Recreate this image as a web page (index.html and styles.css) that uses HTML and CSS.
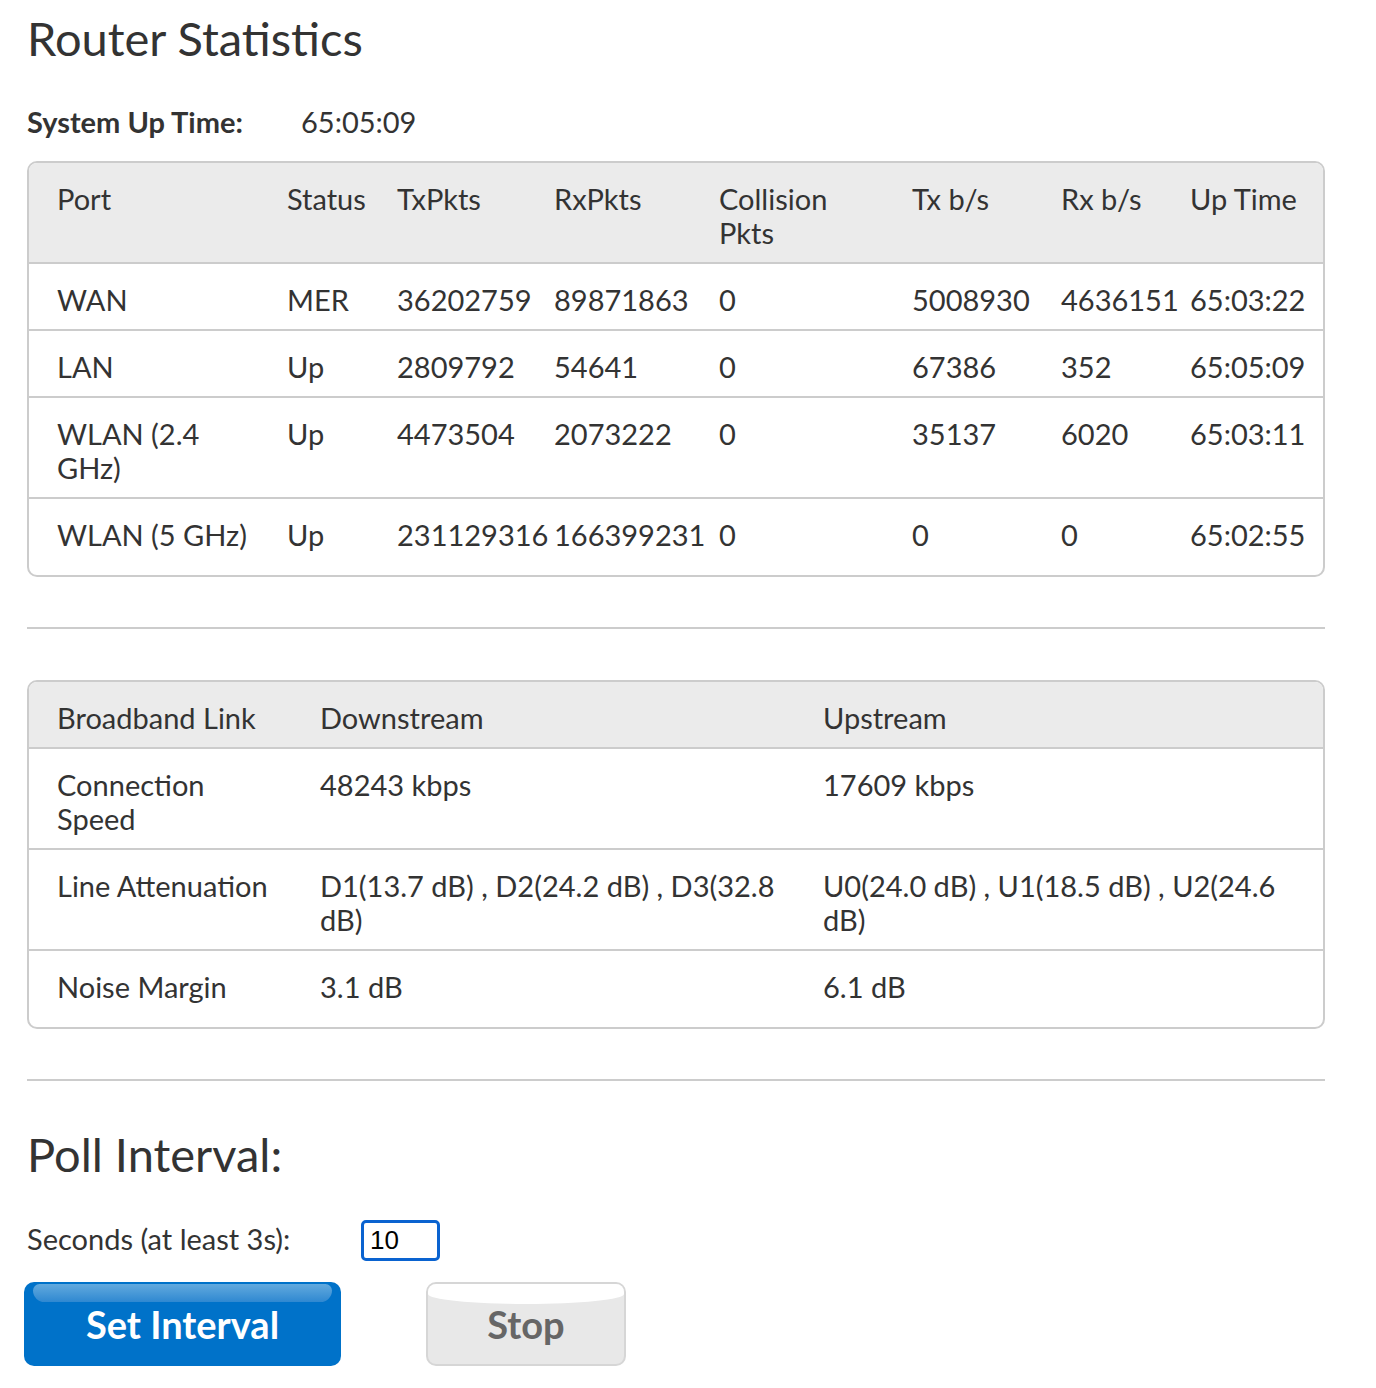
FILE: index.html
```html
<!DOCTYPE html>
<html lang="en">
<head>
    <meta charset="UTF-8">
    <meta name="viewport" content="width=device-width, initial-scale=1.0">
    <title>Router Statistics</title>
    <link rel="stylesheet" href="styles.css">
</head>
<body>
    <div class="page">
        <h1 class="title">Router Statistics</h1>

        <div class="uptime">
            <span class="uptime-label">System Up Time:</span>
            <span class="uptime-value">65:05:09</span>
        </div>

        <div class="table-box">
            <table class="stats ports">
                <colgroup>
                    <col style="width:248px">
                    <col style="width:110px">
                    <col style="width:157px">
                    <col style="width:165px">
                    <col style="width:193px">
                    <col style="width:149px">
                    <col style="width:129px">
                    <col style="width:143px">
                </colgroup>
                <tr>
                    <th>Port</th>
                    <th>Status</th>
                    <th>TxPkts</th>
                    <th>RxPkts</th>
                    <th>Collision<br>Pkts</th>
                    <th>Tx b/s</th>
                    <th>Rx b/s</th>
                    <th>Up Time</th>
                </tr>
                <tr>
                    <td>WAN</td><td>MER</td><td>36202759</td><td>89871863</td><td>0</td><td>5008930</td><td>4636151</td><td>65:03:22</td>
                </tr>
                <tr>
                    <td>LAN</td><td>Up</td><td>2809792</td><td>54641</td><td>0</td><td>67386</td><td>352</td><td>65:05:09</td>
                </tr>
                <tr>
                    <td>WLAN (2.4<br>GHz)</td><td>Up</td><td>4473504</td><td>2073222</td><td>0</td><td>35137</td><td>6020</td><td>65:03:11</td>
                </tr>
                <tr>
                    <td>WLAN (5 GHz)</td><td>Up</td><td>231129316</td><td>166399231</td><td>0</td><td>0</td><td>0</td><td>65:02:55</td>
                </tr>
            </table>
        </div>

        <hr class="divider">

        <div class="table-box">
            <table class="stats link">
                <colgroup>
                    <col style="width:281px">
                    <col style="width:503px">
                    <col style="width:510px">
                </colgroup>
                <tr>
                    <th>Broadband Link</th>
                    <th>Downstream</th>
                    <th>Upstream</th>
                </tr>
                <tr>
                    <td>Connection<br>Speed</td><td>48243 kbps</td><td>17609 kbps</td>
                </tr>
                <tr>
                    <td>Line Attenuation</td>
                    <td>D1(13.7 dB) , D2(24.2 dB) , D3(32.8<br>dB)</td>
                    <td>U0(24.0 dB) , U1(18.5 dB) , U2(24.6<br>dB)</td>
                </tr>
                <tr>
                    <td>Noise Margin</td><td>3.1 dB</td><td>6.1 dB</td>
                </tr>
            </table>
        </div>

        <hr class="divider">

        <h1 class="title poll-title">Poll Interval:</h1>

        <div class="poll-row">
            <label for="pollSeconds" class="poll-label">Seconds (at least 3s):</label>
            <input type="text" id="pollSeconds" class="poll-input" value="10">
        </div>

        <div class="buttons">
            <button class="btn btn-blue">Set Interval</button>
            <button class="btn btn-grey">Stop</button>
        </div>
    </div>
</body>
</html>
```

FILE: styles.css
```css
body {
    font-family: Lato, "Open Sans", sans-serif;
    color: #333;
    background-color: #fff;
    margin: 0;
}
.page {
    width: 1298px;
    margin-left: 27px;
    padding-top: 12px;
}
.title {
    font-size: 47px;
    font-weight: normal;
    line-height: 53px;
    margin: 0;
}
.uptime {
    display: flex;
    font-size: 29px;
    line-height: 34px;
    margin-top: 40px;
}
.uptime-label {
    font-weight: bold;
    width: 274px;
}
.table-box {
    margin-top: 22px;
    border: 2px solid #ccc;
    border-radius: 10px;
    overflow: hidden;
    padding-bottom: 11px;
}
.stats {
    width: 100%;
    table-layout: fixed;
    border-collapse: collapse;
    font-size: 29px;
    line-height: 34px;
}
.stats th, .stats td {
    text-align: left;
    vertical-align: top;
    font-weight: normal;
    padding: 19px 10px 12px;
    white-space: nowrap;
}
.stats th:first-child, .stats td:first-child {
    padding-left: 28px;
}
.stats th {
    background-color: #ebebeb;
}
.stats tr {
    border-bottom: 2px solid #ccc;
}
.stats tr:last-child {
    border-bottom: none;
}
.divider {
    border: none;
    border-top: 2px solid #ccc;
    margin: 50px 0 0;
}
.divider + .table-box {
    margin-top: 51px;
}
.poll-title {
    margin-top: 47px;
}
.poll-row {
    display: flex;
    align-items: center;
    margin-top: 39px;
    font-size: 29px;
    line-height: 34px;
}
.poll-label {
    width: 334px;
    position: relative;
    top: -2px;
}
.poll-input {
    box-sizing: border-box;
    width: 79px;
    height: 41px;
    border: 3px solid #0a63d0;
    border-radius: 5px;
    padding: 0 6px;
    font-family: "Liberation Sans", Arial, sans-serif;
    font-size: 26px;
    color: #000;
    outline: none;
}
.buttons {
    display: flex;
    gap: 85px;
    margin-top: 21px;
    margin-left: -3px;
}
.btn {
    position: relative;
    height: 84px;
    border-radius: 10px;
    font-family: Lato, "Open Sans", sans-serif;
    font-size: 38px;
    font-weight: bold;
    cursor: pointer;
    overflow: hidden;
    padding: 0;
}
.btn-blue {
    width: 317px;
    background-color: #0072c9;
    border: none;
    color: #fff;
}
.btn-blue::before {
    content: "";
    position: absolute;
    left: 9px;
    right: 9px;
    top: 2px;
    height: 18px;
    border-radius: 8px 8px 14px 14px;
    background: linear-gradient(#62aade, #2f88d1);
}
.btn-grey {
    width: 200px;
    background-color: #e8e8e8;
    border: 2px solid #d6d6d6;
    color: #666;
}
.btn-grey::before {
    content: "";
    position: absolute;
    left: 0;
    right: 0;
    top: 0;
    height: 20px;
    border-radius: 0 0 50% 50% / 0 0 10px 10px;
    background-color: #fff;
}
```
